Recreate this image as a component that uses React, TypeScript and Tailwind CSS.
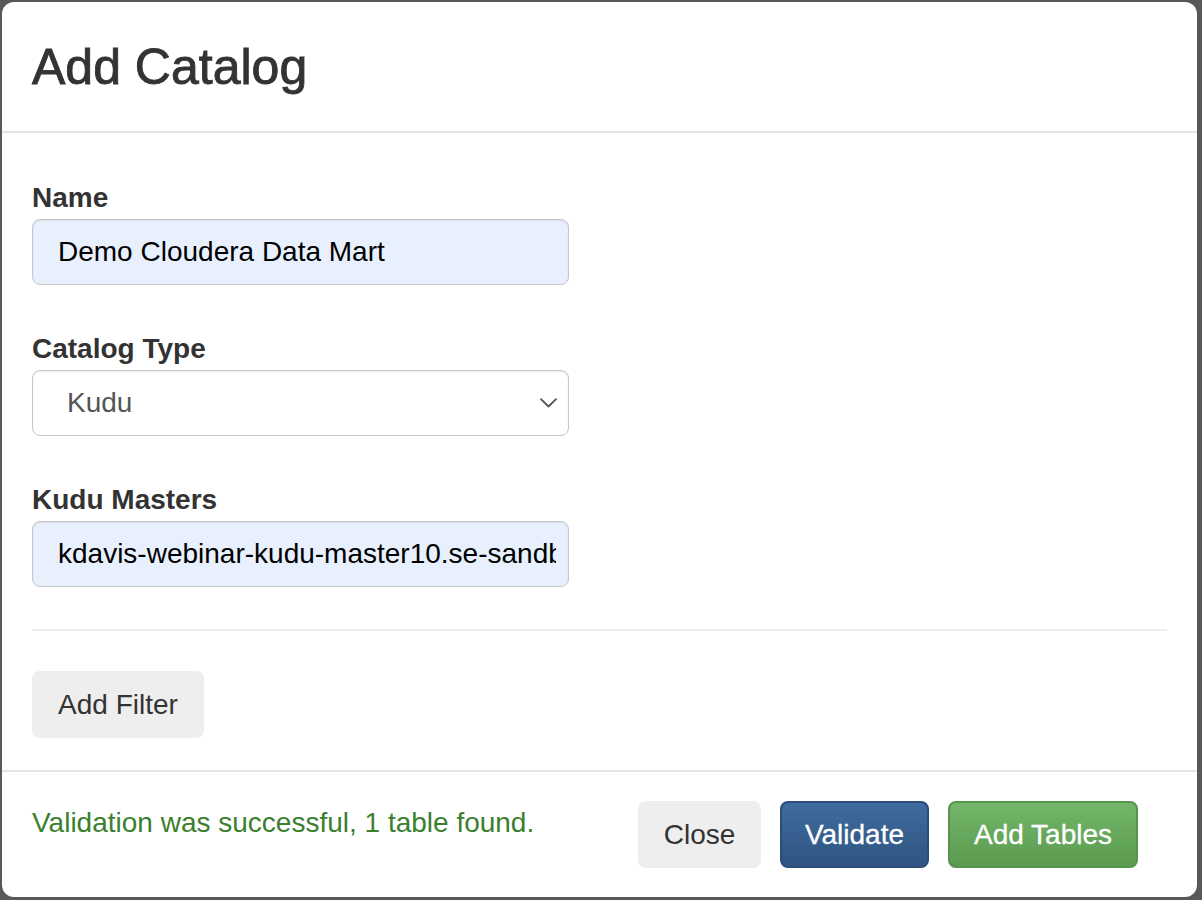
import React from 'react';

const font = "font-['Liberation_Sans',Arial,sans-serif]";

const Label: React.FC<{ children: React.ReactNode }> = ({ children }) => (
  <label className="block text-[28px] leading-[32px] font-bold text-[#333] mb-[5px]">{children}</label>
);

const App: React.FC = () => {
  return (
    <div className={`${font} w-[1202px] h-[900px] bg-[#585858] pt-[2px] pl-[2px] pr-[5px] pb-[3px]`}>
      <div className="w-full h-full bg-white rounded-[12px] flex flex-col overflow-hidden">
        {/* Header */}
        <div className="h-[131px] shrink-0 border-b-2 border-[#e5e5e5] px-[30px] pt-[38px]">
          <h4 className="text-[50px] leading-[55px] font-normal text-[#333] [-webkit-text-stroke:0.9px_#333]">
            Add Catalog
          </h4>
        </div>

        {/* Body */}
        <div className="flex-1 px-[30px] pt-[49px]">
          <div className="mb-[48px]">
            <Label>Name</Label>
            <input
              readOnly
              value="Demo Cloudera Data Mart"
              className="block w-[537px] h-[66px] rounded-[8px] border border-[#c6c6c6] bg-[#e8f0fe] pl-[25px] pr-[12px] text-[28px] text-black outline-none shadow-[inset_0_1px_2px_rgba(0,0,0,0.08)]"
            />
          </div>

          <div className="mb-[48px]">
            <Label>Catalog Type</Label>
            <div className="flex items-center justify-between w-[537px] h-[66px] rounded-[8px] border border-[#c6c6c6] bg-white pl-[34px] pr-[11px] shadow-[inset_0_1px_2px_rgba(0,0,0,0.08)]">
              <span className="text-[28px] text-[#555]">Kudu</span>
              <svg width="17" height="10" viewBox="0 0 17 10" fill="none">
                <path d="M1 1.2 L8.5 8.5 L16 1.2" stroke="#555" strokeWidth="1.8" strokeLinecap="round" strokeLinejoin="round" />
              </svg>
            </div>
          </div>

          <div>
            <Label>Kudu Masters</Label>
            <input
              readOnly
              value="kdavis-webinar-kudu-master10.se-sandbox.cloudera.com"
              className="block w-[537px] h-[66px] rounded-[8px] border border-[#c6c6c6] bg-[#e8f0fe] pl-[25px] pr-[12px] text-[28px] text-black outline-none shadow-[inset_0_1px_2px_rgba(0,0,0,0.08)]"
            />
          </div>

          <div className="mt-[42px] h-[2px] bg-[#eeeeee]" />

          <button className="mt-[40px] w-[172px] h-[67px] rounded-[8px] bg-[#eeeeee] text-[28px] text-[#333]">
            Add Filter
          </button>
        </div>

        {/* Footer */}
        <div className="h-[127px] shrink-0 border-t-2 border-[#e5e5e5] flex items-start justify-between pl-[30px] pr-[59px] pt-[29px]">
          <p className="pt-[2px] text-[28px] leading-[40px] text-[#3b7f2f]">Validation was successful, 1 table found.</p>
          <div className="flex gap-[19px]">
            <button className="w-[123px] h-[67px] rounded-[8px] bg-[#eeeeee] text-[28px] text-[#333]">Close</button>
            <button className="w-[149px] h-[67px] rounded-[8px] border-2 border-[#2b4e79] bg-gradient-to-b from-[#3f6c9e] to-[#2f5482] text-[28px] text-white [-webkit-text-stroke:0.3px_#fff]">
              Validate
            </button>
            <button className="w-[190px] h-[67px] rounded-[8px] border-2 border-[#55954b] bg-gradient-to-b from-[#74b669] to-[#5a9b4f] text-[28px] text-white [-webkit-text-stroke:0.3px_#fff]">
              Add Tables
            </button>
          </div>
        </div>
      </div>
    </div>
  );
};

export default App;
